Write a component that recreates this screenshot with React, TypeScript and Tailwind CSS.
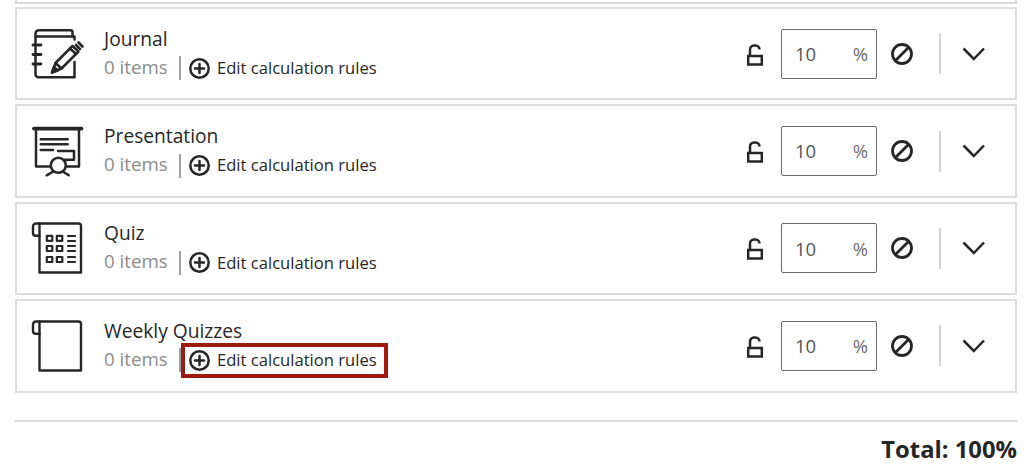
import React from "react";

const ink = "#262626";

function Scroll({ children }: { children?: React.ReactNode }) {
  return (
    <svg width="60" height="60" viewBox="0 0 60 60" fill="none" stroke={ink} strokeWidth="2.400" strokeLinejoin="round" strokeLinecap="round">
      <path d="M12.500 5.500H51.500a2.500 2.500 0 0 1 2.500 2.500V54.500H12.500V5.500" />
      <path d="M12.500 5.500H9a3 3 0 0 0-3 3V15a2.700 2.700 0 0 0 2.700 2.700H12.500" />
      {children}
    </svg>
  );
}

const icons: Record<string, React.ReactNode> = {
  journal: (
    <svg width="60" height="60" viewBox="0 0 60 60" fill="none" stroke={ink} strokeWidth="2.500" strokeLinecap="round" strokeLinejoin="round">
      <path d="M45.500 12.500V8.200a2 2 0 0 0-2-2H12a3.500 3.500 0 0 0-3.500 3.500v40.500a3 3 0 0 0 3 3H47.500V38" />
      <path d="M9 12.500H47.500V15.500" />
      <path d="M6 21H14M6 30.500H14M6 40H14" strokeWidth="2.800" />
      <path d="M25 48.500L28.500 39L45.500 22L51.500 27.500L34.500 44.500Z" />
      <path d="M43 24.500L49 30M28.500 39L34.500 44.500" />
      <path d="M25 48.500L27 43L30.500 46.500Z" fill={ink} />
      <path d="M49 21L53 25M51.500 18.500L55.500 22.500" strokeWidth="2.600" />
    </svg>
  ),
  presentation: (
    <svg width="60" height="60" viewBox="0 0 60 60" fill="none" stroke={ink} strokeWidth="2.500" strokeLinecap="round" strokeLinejoin="round">
      <path d="M7 7.600H54.500" strokeWidth="3.800" />
      <path d="M9 9V45.500H23M38 45.500H52V9" />
      <path d="M13.700 18.300H40.700M13.700 23.300H40.700M13.700 29H26" />
      <path d="M31 30H47V38.800H38" />
      <circle cx="31.300" cy="44.300" r="7.500" fill="#fff" />
      <path d="M19.700 54.300L26.300 50.500M41.700 54.300L35.700 50.500" />
    </svg>
  ),
  quiz: (
    <Scroll>
      <g strokeWidth="2.200">
        <rect x="19.800" y="17.800" width="5.500" height="5" />
        <rect x="29.800" y="17.800" width="5.500" height="5" />
        <rect x="19.800" y="28" width="5.500" height="5" />
        <rect x="29.800" y="28" width="5.500" height="5" />
        <rect x="19.800" y="39" width="5.500" height="5" />
        <rect x="29.800" y="39" width="5.500" height="5" />
        <path d="M41 18H48M41 23H48M41 28H48M41 33H48M41 39H48M41 44H48" />
      </g>
    </Scroll>
  ),
  blank: <Scroll />,
};

function PlusCircle() {
  return (
    <svg width="21" height="21" viewBox="0 0 21 21" fill="none" stroke={ink} strokeWidth="2.500" strokeLinecap="round">
      <circle cx="10.500" cy="10.500" r="9.200" />
      <path d="M10.500 6V15M6 10.500H15" />
    </svg>
  );
}

function Lock() {
  return (
    <svg width="20" height="24" viewBox="0 0 20 24" fill="none" stroke={ink} strokeWidth="2.500" strokeLinejoin="miter">
      <rect x="3.200" y="14" width="13.600" height="8.500" />
      <path d="M5 14V7.500a4 4 0 0 1 4-4h1.500a4 4 0 0 1 4 4" />
    </svg>
  );
}

function Ban() {
  return (
    <svg width="24" height="24" viewBox="0 0 24 24" fill="none" stroke={ink} strokeWidth="2.800">
      <circle cx="12" cy="12" r="9.500" />
      <path d="M5.500 18.500L18.500 5.500" />
    </svg>
  );
}

function Chevron() {
  return (
    <svg width="24" height="14" viewBox="0 0 24 14" fill="none" stroke={ink} strokeWidth="2.500">
      <path d="M1.500 1.500L11.800 12L22 1.500" />
    </svg>
  );
}

function Row({ icon, title, flagged }: { icon: string; title: string; flagged?: boolean }) {
  return (
    <div className="flex h-[93.400px] items-center border-2 border-[#dcdcdc] bg-white">
      <div className="ml-[10px] h-[60px] w-[60px] shrink-0">{icons[icon]}</div>
      <div className="ml-[17px] flex flex-col">
        <div className="relative top-[-1px] h-[25px] text-[19.200px] leading-[25px] text-[#262626]">{title}</div>
        <div className="mt-[4px] flex h-[25px] items-center">
          <span className="relative top-[-1.500px] w-[75px] text-[18.700px] text-[#8c8c8c]">0 items</span>
          <span className="h-[24px] w-[2px] bg-[#a0a0a0]" />
          <span className="relative ml-[8px] flex items-center gap-[7px] text-[16.600px] text-[#262626]">
            <PlusCircle />
            <span className="font-medium">Edit calculation rules</span>
            {flagged && <span className="absolute left-[-8px] right-[-11px] top-[-5px] bottom-[-5px] border-[4px] border-[#9c1a10]" />}
          </span>
        </div>
      </div>
      <div className="ml-auto flex items-center">
        <Lock />
        <div className="ml-[16px] flex h-[50px] w-[96px] items-center justify-between rounded-[2px] border border-[#6b6b6b] pl-[13px] pr-[8px] text-[18.500px] text-[#555555]">
          <span>10</span>
          <span className="text-[#6e6e6e]">%</span>
        </div>
        <div className="ml-[13px]"><Ban /></div>
        <div className="ml-[25px] h-[41px] w-[2px] bg-[#d4d4d4]" />
        <div className="ml-[21px] mr-[29px]"><Chevron /></div>
      </div>
    </div>
  );
}

export default function App() {
  return (
    <div className="flex h-[472px] w-[1024px] flex-col overflow-hidden bg-white pl-[15px] pr-[7px] font-['Open_Sans',sans-serif]">
      <div className="h-[4px] shrink-0 border-x-2 border-b-2 border-[#dcdcdc]" />
      <div className="mt-[3px] flex flex-col gap-[4px]">
        <Row icon="journal" title="Journal" />
        <Row icon="presentation" title="Presentation" />
        <Row icon="quiz" title="Quiz" />
        <Row icon="blank" title="Weekly Quizzes" flagged />
      </div>
      <div className="mt-[27.600px] border-t-2 border-[#dcdcdc]" />
      <div className="mt-[12px] text-right text-[23.800px] font-bold leading-[30px] text-[#262626]">Total: 100%</div>
    </div>
  );
}
